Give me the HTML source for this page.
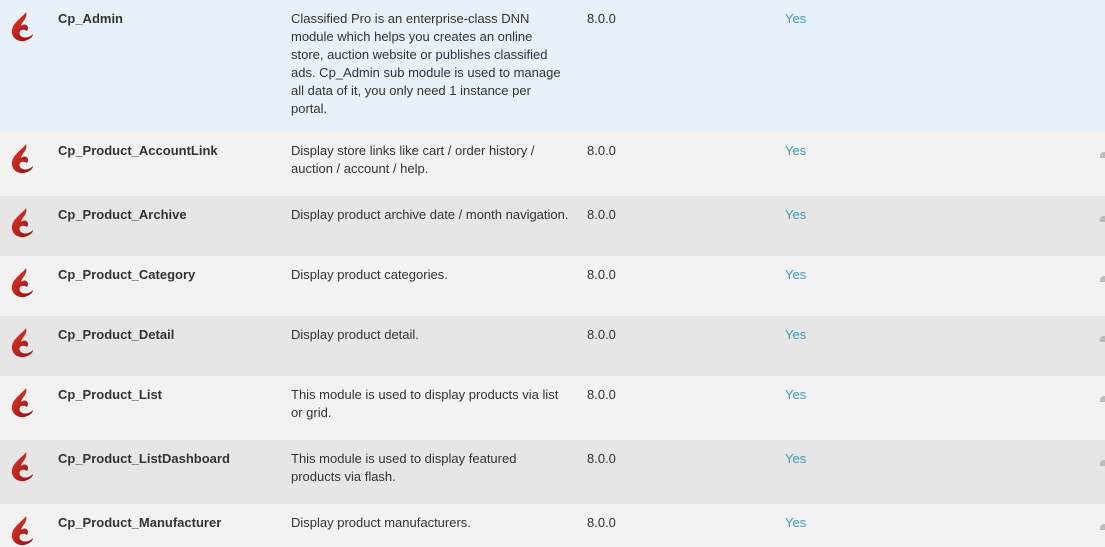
<!DOCTYPE html>
<html><head><style>
body{margin:0;width:1105px;height:543px;overflow:hidden;font-family:"Liberation Sans",Arial,sans-serif;font-size:13px;color:#333;background:#f2f2f2}
.r{position:absolute;left:0;width:1105px}
.r div{position:absolute;line-height:18px}
.n{left:58px;top:10px;font-weight:bold;font-size:13px;color:#333}
.d{left:291px;top:10px;width:274px}
.v{left:587px;top:10px}
.y{left:785px;top:10px;color:#3d9ab8}
svg{position:absolute;left:9px;top:11px}
.a{position:absolute;right:0;top:20px;width:5px;height:6px;background:#bbb;border-radius:4px 0 0 0}
</style></head><body>
<svg width="0" height="0" style="position:absolute"><defs><linearGradient id="g" x1="0" y1="0" x2="1" y2="1"><stop offset="0" stop-color="#e8392f"/><stop offset="1" stop-color="#8e0f10"/></linearGradient>
<symbol id="f" viewBox="0 0 24 32"><path d="M16 1 C13 6 3 11 2 19 C1 26 7 31 14 30 C19 29 23 26 23 23 C19 27 13 28 10 24 C8 20 12 17 17 20 C20 16 16 11 11 15 C12 10 18 7 16 1Z" fill="url(#g)"/></symbol></defs></svg>
<div class="r" style="top:0;height:132px;background:#e8f0fa"><svg width="26" height="32"><use href="#f"/></svg><div class="n">Cp_Admin</div><div class="d">Classified Pro is an enterprise-class DNN module which helps you creates an online store, auction website or publishes classified ads. Cp_Admin sub module is used to manage all data of it, you only need 1 instance per portal.</div><div class="v">8.0.0</div><div class="y">Yes</div></div>
<div class="r" style="top:132px;height:64px;background:#f2f2f2"><svg width="26" height="32"><use href="#f"/></svg><div class="n">Cp_Product_AccountLink</div><div class="d">Display store links like cart / order history / auction / account / help.</div><div class="v">8.0.0</div><div class="y">Yes</div><span class="a"></span></div>
<div class="r" style="top:196px;height:60px;background:#e6e6e6"><svg width="26" height="32"><use href="#f"/></svg><div class="n">Cp_Product_Archive</div><div class="d" style="width:295px">Display product archive date / month navigation.</div><div class="v">8.0.0</div><div class="y">Yes</div><span class="a"></span></div>
<div class="r" style="top:256px;height:60px;background:#f2f2f2"><svg width="26" height="32"><use href="#f"/></svg><div class="n">Cp_Product_Category</div><div class="d">Display product categories.</div><div class="v">8.0.0</div><div class="y">Yes</div><span class="a"></span></div>
<div class="r" style="top:316px;height:60px;background:#e6e6e6"><svg width="26" height="32"><use href="#f"/></svg><div class="n">Cp_Product_Detail</div><div class="d">Display product detail.</div><div class="v">8.0.0</div><div class="y">Yes</div><span class="a"></span></div>
<div class="r" style="top:376px;height:64px;background:#f2f2f2"><svg width="26" height="32"><use href="#f"/></svg><div class="n">Cp_Product_List</div><div class="d">This module is used to display products via list or grid.</div><div class="v">8.0.0</div><div class="y">Yes</div><span class="a"></span></div>
<div class="r" style="top:440px;height:64px;background:#e6e6e6"><svg width="26" height="32"><use href="#f"/></svg><div class="n">Cp_Product_ListDashboard</div><div class="d">This module is used to display featured products via flash.</div><div class="v">8.0.0</div><div class="y">Yes</div><span class="a"></span></div>
<div class="r" style="top:504px;height:39px;background:#f2f2f2"><svg width="26" height="32"><use href="#f"/></svg><div class="n">Cp_Product_Manufacturer</div><div class="d">Display product manufacturers.</div><div class="v">8.0.0</div><div class="y">Yes</div><span class="a"></span></div>
</body></html>
